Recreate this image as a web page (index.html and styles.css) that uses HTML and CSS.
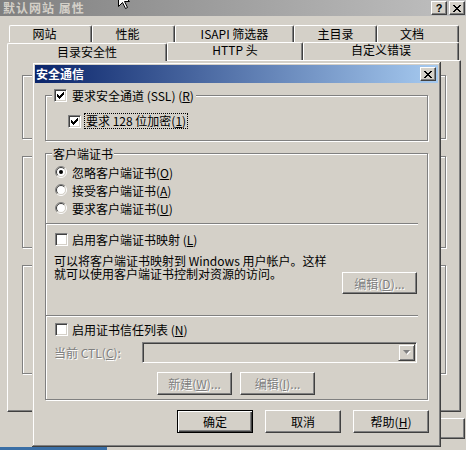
FILE: index.html
```html
<!DOCTYPE html>
<html lang="zh-CN">
<head>
<meta charset="utf-8">
<title>默认网站 属性</title>
<link rel="stylesheet" href="styles.css">
</head>
<body>
<div class="screen">
  <div class="props">
    <div class="caption">
      <span class="caption-text">默认网站 属性</span>
      <div class="caption-buttons">
        <span class="cbtn help">?</span>
        <span class="cbtn"><svg width="8" height="7" viewBox="0 0 8 7"><path d="M0 0h2v1H0zM6 0h2v1H6zM1 1h2v1H1zM5 1h2v1H5zM2 2h4v1H2zM3 3h2v1H3zM2 4h4v1H2zM1 5h2v1H1zM5 5h2v1H5zM0 6h2v1H0zM6 6h2v1H6z"/></svg></span>
      </div>
    </div>
    <div class="tabs">
      <div class="tab-row back">
        <div class="tab t-site">网站</div>
        <div class="tab t-perf">性能</div>
        <div class="tab t-isapi">ISAPI 筛选器</div>
        <div class="tab t-home">主目录</div>
        <div class="tab t-docs">文档</div>
      </div>
      <div class="tab-row front">
        <div class="tab selected t-sec">目录安全性</div>
        <div class="tab t-http">HTTP 头</div>
        <div class="tab t-err">自定义错误</div>
      </div>
    </div>
    <div class="page">
      <div class="bg-group g1"></div>
      <div class="bg-group g2"></div>
      <div class="bg-group g3"></div>
    </div>
    <div class="props-buttons">
      <span class="btn">确定</span>
      <span class="btn">取消</span>
      <span class="btn">应用(A)</span>
      <span class="btn">帮助</span>
    </div>
  </div>
  <div class="desktop-strip"><span class="desk-blue"></span></div>

  <svg class="cursor" width="14" height="21" viewBox="0 0 14 21"><polygon points="0.5,0.5 0.5,16.5 4.5,12.5 7.5,18.5 9.5,17.5 6.5,11.5 11.5,11.5" fill="#fff" stroke="#000"/></svg>

  <div class="dialog">
    <div class="dialog-caption">
      <span class="dialog-title">安全通信</span>
      <span class="cbtn"><svg width="8" height="7" viewBox="0 0 8 7"><path d="M0 0h2v1H0zM6 0h2v1H6zM1 1h2v1H1zM5 1h2v1H5zM2 2h4v1H2zM3 3h2v1H3zM2 4h4v1H2zM1 5h2v1H1zM5 5h2v1H5zM0 6h2v1H0zM6 6h2v1H6z"/></svg></span>
    </div>
    <div class="dialog-body">
      <fieldset class="group ssl">
        <legend class="legend-check">
          <span class="check"><svg width="7" height="7" viewBox="0 0 7 7"><path d="M0 2h1v3H0zM1 3h1v3H1zM2 4h1v3H2zM3 3h1v3H3zM4 2h1v3H4zM5 1h1v3H5zM6 0h1v3H6z"/></svg></span>
          <span>要求安全通道 (SSL) (<u>R</u>)</span>
        </legend>
        <div class="opt nested">
          <span class="check"><svg width="7" height="7" viewBox="0 0 7 7"><path d="M0 2h1v3H0zM1 3h1v3H1zM2 4h1v3H2zM3 3h1v3H3zM4 2h1v3H4zM5 1h1v3H5zM6 0h1v3H6z"/></svg></span>
          <span class="focus">要求 128 位加密(<u>1</u>)</span>
        </div>
      </fieldset>

      <fieldset class="group client">
        <legend class="legend-text">客户端证书</legend>
        <div class="radios">
          <div class="opt radio-row">
            <svg class="radio" width="12" height="12" viewBox="0 0 12 12"><circle cx="6" cy="6" r="4.5" fill="#fff"/><path d="M2.1 9.9A5.5 5.5 0 0 1 9.9 2.1" fill="none" stroke="#808080"/><path d="M9.9 2.1A5.5 5.5 0 0 1 2.1 9.9" fill="none" stroke="#fff"/><path d="M2.8 9.2A4.5 4.5 0 0 1 9.2 2.8" fill="none" stroke="#404040"/><path d="M9.2 2.8A4.5 4.5 0 0 1 2.8 9.2" fill="none" stroke="#d4d0c8"/><circle cx="6" cy="6" r="2" fill="#000"/></svg>
            <span>忽略客户端证书(<u>O</u>)</span>
          </div>
          <div class="opt radio-row">
            <svg class="radio" width="12" height="12" viewBox="0 0 12 12"><circle cx="6" cy="6" r="4.5" fill="#fff"/><path d="M2.1 9.9A5.5 5.5 0 0 1 9.9 2.1" fill="none" stroke="#808080"/><path d="M9.9 2.1A5.5 5.5 0 0 1 2.1 9.9" fill="none" stroke="#fff"/><path d="M2.8 9.2A4.5 4.5 0 0 1 9.2 2.8" fill="none" stroke="#404040"/><path d="M9.2 2.8A4.5 4.5 0 0 1 2.8 9.2" fill="none" stroke="#d4d0c8"/></svg>
            <span>接受客户端证书(<u>A</u>)</span>
          </div>
          <div class="opt radio-row">
            <svg class="radio" width="12" height="12" viewBox="0 0 12 12"><circle cx="6" cy="6" r="4.5" fill="#fff"/><path d="M2.1 9.9A5.5 5.5 0 0 1 9.9 2.1" fill="none" stroke="#808080"/><path d="M9.9 2.1A5.5 5.5 0 0 1 2.1 9.9" fill="none" stroke="#fff"/><path d="M2.8 9.2A4.5 4.5 0 0 1 9.2 2.8" fill="none" stroke="#404040"/><path d="M9.2 2.8A4.5 4.5 0 0 1 2.8 9.2" fill="none" stroke="#d4d0c8"/></svg>
            <span>要求客户端证书(<u>U</u>)</span>
          </div>
        </div>

        <div class="sep sep-map"></div>
        <div class="opt check-row row-map">
          <span class="check"></span>
          <span>启用客户端证书映射 (<u>L</u>)</span>
        </div>
        <div class="mapping">
          <p class="mapping-text">可以将客户端证书映射到 Windows 用户帐户。这样<br>就可以使用客户端证书控制对资源的访问。</p>
          <span class="btn disabled btn-map">编辑(<u>D</u>)...</span>
        </div>

        <div class="sep sep-ctl"></div>
        <div class="opt check-row row-ctl">
          <span class="check"></span>
          <span>启用证书信任列表 (<u>N</u>)</span>
        </div>
        <div class="ctl-row">
          <span class="ctl-label disabled">当前 CTL(<u>C</u>):</span>
          <div class="combo">
            <span class="combo-btn"><svg width="8" height="5" viewBox="0 0 8 5"><path d="M1 1h7L4.5 5z" fill="#fff"/><path d="M0 0h7L3.5 4z" fill="#808080"/></svg></span>
          </div>
        </div>
        <div class="ctl-buttons">
          <span class="btn disabled">新建(<u>W</u>)...</span>
          <span class="btn disabled">编辑(<u>I</u>)...</span>
        </div>
      </fieldset>

      <div class="dialog-buttons">
        <span class="btn default">确定</span>
        <span class="btn">取消</span>
        <span class="btn">帮助(<u>H</u>)</span>
      </div>
    </div>
  </div>
</div>
</body>
</html>
```

FILE: styles.css
```css
* { box-sizing: border-box; }

html, body {
  margin: 0;
  padding: 0;
}

body {
  width: 466px;
  height: 450px;
  overflow: hidden;
  background: #d4d0c8;
  font-family: "Noto Sans CJK SC", "Noto Sans", sans-serif;
  font-size: 12px;
  line-height: 13px;
  color: #000;
}

u { text-decoration: underline; text-underline-offset: 1px; }

.screen {
  position: relative;
  width: 466px;
  height: 450px;
  overflow: hidden;
}

/* ---------- outer properties window ---------- */
.props {
  height: 447px;
  display: flex;
  flex-direction: column;
}

.caption {
  height: 16px;
  flex: none;
  display: flex;
  justify-content: space-between;
  align-items: flex-start;
  background: linear-gradient(to right, #808080, #c0c0c0);
  color: #d4d0c8;
}

.caption-text {
  font-weight: bold;
  line-height: 16px;
  padding-left: 3px;
  letter-spacing: 1px;
}

.caption-buttons {
  display: flex;
  gap: 2px;
  padding: 1px 1px 0 0;
}

.cbtn {
  width: 16px;
  height: 14px;
  flex: none;
  display: flex;
  align-items: center;
  justify-content: center;
  background: #d4d0c8;
  border: 1px solid;
  border-color: #fff #404040 #404040 #fff;
  box-shadow: inset -1px -1px #808080;
  color: #000;
}

.cbtn.help {
  font-family: "Liberation Sans", sans-serif;
  font-weight: bold;
  font-size: 11px;
  line-height: 12px;
}

.tabs {
  margin-top: 9px;
  height: 35px;
  flex: none;
  display: flex;
  flex-direction: column;
}

.tab-row { display: flex; }

.tab-row.back {
  height: 17px;
  padding-left: 9px;
}

.tab-row.front {
  height: 18px;
  padding-left: 7px;
  align-items: flex-end;
  position: relative;
  z-index: 1;
}

.tab {
  flex: none;
  text-align: center;
  background: #d4d0c8;
  border-top: 1px solid #fff;
  border-left: 1px solid #fff;
  border-right: 1px solid #404040;
  box-shadow: inset -1px 0 #808080;
  border-radius: 2px 2px 0 0;
  line-height: 14px;
}

.tab-row.back .tab {
  height: 17px;
  padding-top: 1px;
}

.tab-row.front .tab {
  height: 18px;
}

.tab.selected {
  height: 21px;
  margin-bottom: -1px;
  padding-top: 1px;
}

.t-site  { width: 83px; padding-right: 12px; }
.t-perf  { width: 83px; padding-right: 12px; }
.t-isapi { width: 119px; }
.t-home  { width: 83px; }
.t-docs  { width: 82px; padding-right: 12px; }
.t-sec   { width: 160px; }
.t-http  { width: 136px; }
.t-err   { width: 156px; }

.page {
  height: 352px;
  flex: none;
  margin: 0 5px 0 7px;
  border: 1px solid;
  border-color: #fff #404040 #404040 #fff;
  box-shadow: inset -1px -1px #808080;
  padding: 14px 0 0 14px;
}

.bg-group {
  width: 424px;
  border: 1px solid #808080;
  box-shadow: inset 1px 1px #fff, 1px 1px #fff;
}

.g1 { height: 64px; }
.g2 { height: 92px; margin-top: 17px; }
.g3 { height: 109px; margin-top: 17px; }

.props-buttons {
  margin-top: 6px;
  display: flex;
  justify-content: flex-end;
  gap: 6px;
  padding-right: 1px;
}

.props-buttons .btn { height: 21px; }

.desktop-strip {
  height: 3px;
  display: flex;
  background: #d4d0c8;
}

.desk-blue {
  width: 107px;
  background: #3a6ea5;
}

.cursor {
  position: absolute;
  left: 118px;
  top: -10px;
}

/* ---------- controls ---------- */
.btn {
  width: 75px;
  height: 23px;
  flex: none;
  display: flex;
  align-items: center;
  justify-content: center;
  background: #d4d0c8;
  border: 1px solid;
  border-color: #fff #404040 #404040 #fff;
  box-shadow: inset -1px -1px #808080;
  white-space: nowrap;
}

.btn.default {
  border-color: #000;
  box-shadow: inset 1px 1px #fff, inset -1px -1px #404040, inset -2px -2px #808080;
}

.disabled {
  color: #808080;
  text-shadow: 1px 1px 0 #fff;
}

.check {
  width: 13px;
  height: 13px;
  flex: none;
  display: flex;
  align-items: center;
  justify-content: center;
  background: #fff;
  border: 1px solid;
  border-color: #808080 #fff #fff #808080;
  box-shadow: inset 1px 1px #404040, inset -1px -1px #d4d0c8;
}

.radio { flex: none; display: block; }

.opt {
  display: flex;
  align-items: center;
  white-space: nowrap;
}

/* ---------- security dialog ---------- */
.dialog {
  position: absolute;
  left: 32px;
  top: 62px;
  width: 409px;
  height: 385px;
  padding: 3px;
  background: #d4d0c8;
  box-shadow: inset -1px -1px #404040, inset 1px 1px #d4d0c8, inset -2px -2px #808080, inset 2px 2px #fff;
  display: flex;
  flex-direction: column;
}

.dialog-caption {
  height: 18px;
  flex: none;
  display: flex;
  align-items: center;
  justify-content: space-between;
  padding: 0 2px 0 1px;
  background: linear-gradient(to right, #0a246a, #a6caf0);
  color: #fff;
  font-weight: bold;
}

.dialog-title { line-height: 18px; }

.dialog-body {
  padding: 0 10px;
  display: flex;
  flex-direction: column;
}

.group {
  margin: 6px 0 0;
  min-width: 0;
  padding: 0 6px;
  border: 1px solid #808080;
  box-shadow: inset 1px 1px #fff, 1px 1px #fff;
}

.group legend {
  height: 13px;
  line-height: 13px;
  background: #d4d0c8;
}

.legend-check {
  display: flex;
  align-items: center;
  gap: 5px;
  padding: 0 2px;
}

.legend-text { padding: 0 1px; }

.ssl { padding-bottom: 11px; }

.nested {
  height: 16px;
  margin: 11px 0 0 16px;
  gap: 3px;
}

.focus {
  border: 1px dotted #000;
  padding: 0 1px;
  height: 16px;
  line-height: 14px;
}

.client {
  display: flex;
  flex-direction: column;
  padding-bottom: 4px;
}

.radios {
  margin: 3px 0 0 3px;
  display: flex;
  flex-direction: column;
}

.radio-row {
  height: 18px;
  gap: 5px;
}

.sep {
  width: 372px;
  height: 2px;
  margin-left: -6px;
  border-top: 1px solid #808080;
  border-bottom: 1px solid #fff;
}

.sep-map { margin-top: 6px; }
.sep-ctl { margin-top: 21px; }

.check-row {
  height: 18px;
  gap: 4px;
  margin-left: 3px;
}

.row-map { margin-top: 5px; }
.row-ctl { margin-top: 3px; }

.mapping {
  display: flex;
  flex-direction: column;
}

.mapping-text {
  margin: 6px 0 0 2px;
  line-height: 13px;
}

.btn-map {
  height: 22px;
  align-self: flex-end;
  margin: -8px 4px 0 0;
}

.ctl-row {
  margin-top: 4px;
  height: 21px;
  display: flex;
  align-items: center;
}

.ctl-label {
  width: 88px;
  margin-left: 2px;
  flex: none;
}

.combo {
  width: 275px;
  height: 21px;
  flex: none;
  display: flex;
  justify-content: flex-end;
  padding: 1px;
  background: #d4d0c8;
  border: 1px solid;
  border-color: #808080 #fff #fff #808080;
  box-shadow: inset 1px 1px #404040, inset -1px -1px #d4d0c8;
}

.combo-btn {
  width: 17px;
  height: 17px;
  display: flex;
  align-items: center;
  justify-content: center;
  border: 1px solid;
  border-color: #d4d0c8 #404040 #404040 #d4d0c8;
  box-shadow: inset 1px 1px #fff, inset -1px -1px #808080;
}

.ctl-buttons {
  margin-top: 9px;
  padding-left: 105px;
  display: flex;
  gap: 8px;
}

.dialog-buttons {
  margin: 10px -1px 0 0;
  display: flex;
  justify-content: flex-end;
  gap: 12px;
}

.dialog-buttons .btn { width: 76px; }
```
